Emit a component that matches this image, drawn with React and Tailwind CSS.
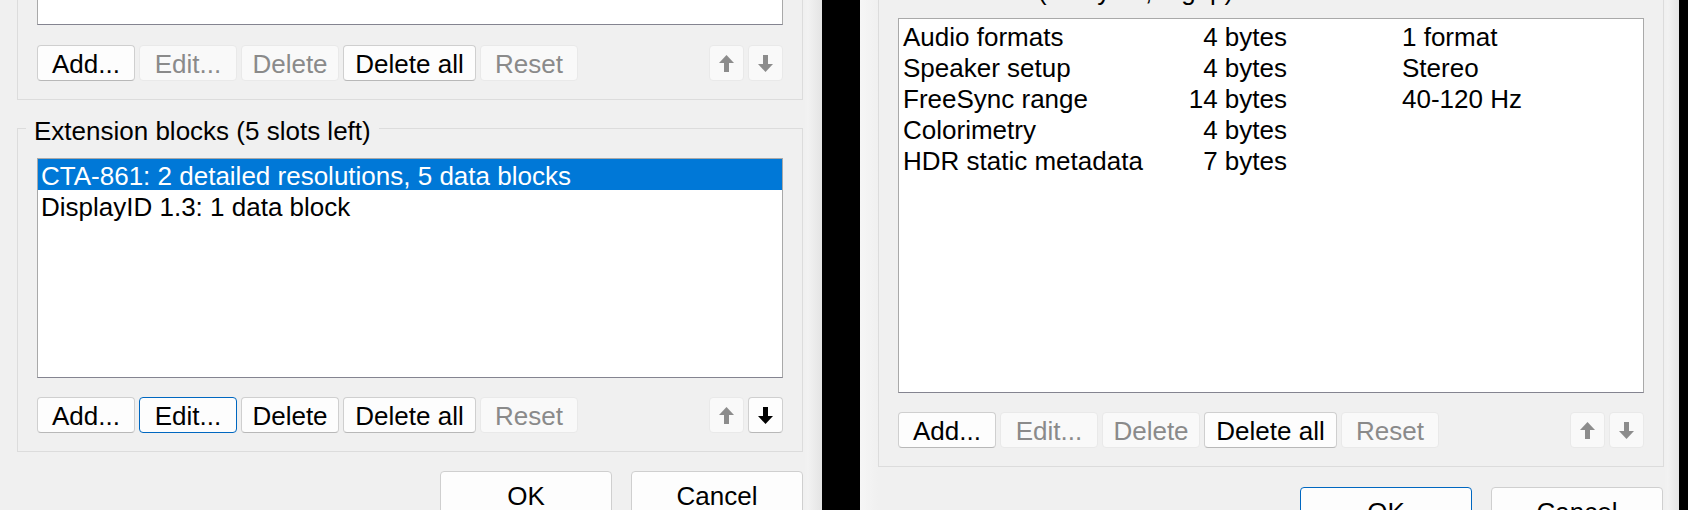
const btnBase = 'flex h-[36px] shrink-0 items-center justify-center rounded-[4px] border pt-[2px] whitespace-nowrap'
const btnOn = 'border-[#cfcfcf] border-b-[#b8b8b8] bg-[#fdfdfd] text-black'
const btnOff = 'border-[#e9e9e9] bg-[#f9f9f9] text-[#8a8a8a]'
const btnFocus = 'border-[#0067c0] bg-[#fdfdfd] text-black'

function stateClass(state) {
  if (state === 'focus') return btnFocus
  if (state === 'off') return btnOff
  return btnOn
}

function Arrow({ dir, color }) {
  const d = dir === 'up' ? 'M7.5 0L15 8H10V17H5V8H0Z' : 'M7.5 17L15 9H10V0H5V9H0Z'
  return (
    <svg width="15" height="17" viewBox="0 0 15 17">
      <path d={d} fill={color} />
    </svg>
  )
}

function ButtonRow({ s, className = '' }) {
  return (
    <div className={`flex items-center ${className}`}>
      <div className="flex gap-[4px]">
        <div className={`${btnBase} w-[98px] ${stateClass(s.add)}`}>Add...</div>
        <div className={`${btnBase} w-[98px] ${stateClass(s.edit)}`}>Edit...</div>
        <div className={`${btnBase} w-[98px] ${stateClass(s.del)}`}>Delete</div>
        <div className={`${btnBase} w-[133px] ${stateClass(s.all)}`}>Delete all</div>
        <div className={`${btnBase} w-[98px] ${stateClass(s.reset)}`}>Reset</div>
      </div>
      <div className="ml-auto flex gap-[4px]">
        <div className={`${btnBase} w-[35px] !pt-0 ${stateClass(s.up)}`}>
          <Arrow dir="up" color={s.up === 'off' ? '#8c8c8c' : '#000'} />
        </div>
        <div className={`${btnBase} w-[35px] !pt-0 ${stateClass(s.down)}`}>
          <Arrow dir="down" color={s.down === 'off' ? '#8c8c8c' : '#000'} />
        </div>
      </div>
    </div>
  )
}

function Group({ label, className = '', children }) {
  return (
    <div className={`w-[786px] border border-[#dcdcdc] px-[19px] pb-[18px] ${className}`}>
      <div className="-mt-[16px] -ml-[11px] h-[30px] w-fit whitespace-nowrap bg-[#f0f0f0] px-[8px] pt-[3px] leading-[30px]">
        {label}
      </div>
      {children}
    </div>
  )
}

function DialogButtons({ okDefault, className = '' }) {
  return (
    <div className={`flex justify-end gap-[19px] ${className}`}>
      <div className={`flex h-[48px] w-[172px] items-center justify-center rounded-[4px] border bg-[#fdfdfd] pt-[2px] ${okDefault ? 'border-[#0067c0]' : 'border-[#cfcfcf]'}`}>
        OK
      </div>
      <div className="flex h-[48px] w-[172px] items-center justify-center rounded-[4px] border border-[#cfcfcf] bg-[#fdfdfd] pt-[2px]">
        Cancel
      </div>
    </div>
  )
}

const listBorder = 'border border-[#a9a9a9] border-b-[#848490] bg-white'

const dataBlocks = [
  ['Audio formats', '4 bytes', '1 format'],
  ['Speaker setup', '4 bytes', 'Stereo'],
  ['FreeSync range', '14 bytes', '40-120 Hz'],
  ['Colorimetry', '4 bytes', ''],
  ['HDR static metadata', '7 bytes', ''],
]

export default function App() {
  return (
    <div className="flex h-[510px] w-[1688px] overflow-hidden bg-black font-['Segoe_UI','Liberation_Sans',Arial,sans-serif] text-[26px] text-black">
      {/* left dialog */}
      <div className="h-full w-[822px] shrink-0 bg-[linear-gradient(90deg,#f0f0f0_0,#f0f0f0_804px,#f2f2f2_808px,#e4e4e4_822px)]">
        <div className="ml-[17px] w-[786px] border-x border-b border-[#dcdcdc] px-[19px] pb-[18px]">
          <div className="h-[25px] border-x border-b border-[#a9a9a9] border-b-[#848490] bg-white" />
          <ButtonRow
            className="mt-[20px]"
            s={{ add: 'on', edit: 'off', del: 'off', all: 'on', reset: 'off', up: 'off', down: 'off' }}
          />
        </div>

        <Group label="Extension blocks (5 slots left)" className="mt-[28px] ml-[17px]">
          <div className={`mt-[15px] h-[220px] ${listBorder}`}>
            <div className="h-[31px] bg-[#0078d7] pl-[3px] pt-[3px] leading-[29px] whitespace-nowrap text-white">
              CTA-861: 2 detailed resolutions, 5 data blocks
            </div>
            <div className="h-[31px] pl-[3px] pt-[3px] leading-[29px] whitespace-nowrap">
              DisplayID 1.3: 1 data block
            </div>
          </div>
          <ButtonRow
            className="mt-[19px]"
            s={{ add: 'on', edit: 'focus', del: 'on', all: 'on', reset: 'off', up: 'off', down: 'on' }}
          />
        </Group>

        <DialogButtons className="mt-[19px] pr-[19px]" />
      </div>

      <div className="w-[38px] shrink-0 bg-black" />

      {/* right dialog */}
      <div className="h-full w-[819px] shrink-0 bg-[linear-gradient(90deg,#f6f6f6_0,#f0f0f0_18px,#f0f0f0_804px,#f2f2f2_808px,#e4e4e4_819px)]">
        <Group label="Data blocks (33 bytes, 1 gap)" className="-mt-[12px] ml-[18px]">
          <div className={`mt-[15px] h-[375px] pt-[1px] ${listBorder}`}>
            {dataBlocks.map(([name, size, info]) => (
              <div key={name} className="flex h-[31px] pl-[4px] pt-[3px] leading-[29px] whitespace-nowrap">
                <div className="w-[240px]">{name}</div>
                <div className="w-[144px] text-right">{size}</div>
                <div className="pl-[115px]">{info}</div>
              </div>
            ))}
          </div>
          <ButtonRow
            className="mt-[19px]"
            s={{ add: 'on', edit: 'off', del: 'off', all: 'on', reset: 'off', up: 'off', down: 'off' }}
          />
        </Group>

        <DialogButtons okDefault className="mt-[20px] pr-[16px]" />
      </div>

      <div className="w-[9px] shrink-0 bg-black" />
    </div>
  )
}
